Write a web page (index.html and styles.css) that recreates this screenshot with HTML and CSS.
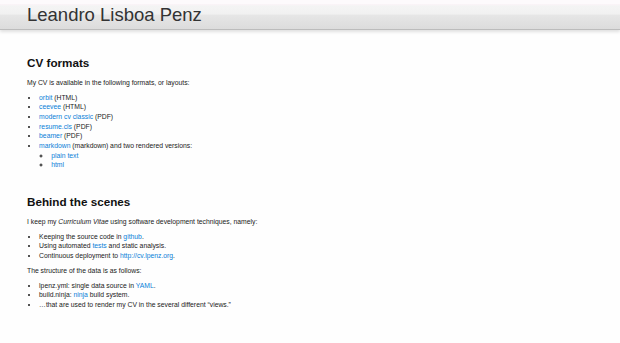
FILE: index.html
```html
<!DOCTYPE html>
<html lang="en">
<head>
  <meta charset="UTF-8">
  <meta name="viewport" content="width=device-width, initial-scale=1.0">
  <title>Leandro Lisboa Penz</title>
  <link rel="stylesheet" href="styles.css">
</head>
<body>
  <div class="navbar">
    <span class="brand">Leandro Lisboa Penz</span>
  </div>

  <div class="container">
    <div class="section">
      <h2>CV formats</h2>
      <p>My CV is available in the following formats, or layouts:</p>
      <ul>
        <li><a href="#">orbit</a> (HTML)</li>
        <li><a href="#">ceevee</a> (HTML)</li>
        <li><a href="#">modern cv classic</a> (PDF)</li>
        <li><a href="#">resume.cls</a> (PDF)</li>
        <li><a href="#">beamer</a> (PDF)</li>
        <li><a href="#">markdown</a> (markdown) and two rendered versions:
          <ul>
            <li><a href="#">plain text</a></li>
            <li><a href="#">html</a></li>
          </ul>
        </li>
      </ul>
    </div>

    <div class="section">
      <h2>Behind the scenes</h2>
      <p>I keep my <em>Curriculum Vitae</em> using software development techniques, namely:</p>
      <ul>
        <li>Keeping the source code in <a href="#">github</a>.</li>
        <li>Using automated <a href="#">tests</a> and static analysis.</li>
        <li>Continuous deployment to <a href="#">http://cv.lpenz.org</a>.</li>
      </ul>
      <p>The structure of the data is as follows:</p>
      <ul>
        <li>lpenz.yml: single data source in <a href="#">YAML</a>.</li>
        <li>build.ninja: <a href="#">ninja</a> build system.</li>
        <li>&hellip;that are used to render my CV in the several different &ldquo;views.&rdquo;</li>
      </ul>
    </div>
  </div>
</body>
</html>
```

FILE: styles.css
```css
* {
  box-sizing: border-box;
}

body {
  margin: 0;
  background: #fefefe;
  color: #1a1a1a;
  font-family: 'Liberation Sans', Arial, sans-serif;
  font-size: 6.8px;
  line-height: 9.7px;
}

a {
  color: #0a80d8;
  text-decoration: none;
}

.navbar {
  height: 30px;
  padding: 0 27px;
  border-top: 4px solid #fdfafc;
  border-bottom: 1px solid #bcbcbc;
  background: linear-gradient(#fbf3f8 0, #f4f4f4 8%, #f1f1f1 40%, #e6e6e6 45%, #dcdcdc 100%);
  box-shadow: 0 2px 3px rgba(0, 0, 0, 0.12);
}

.brand {
  display: block;
  font-size: 18.5px;
  line-height: 21px;
  color: #333;
}

.container {
  padding: 0 27px;
}

.section {
  margin-top: 23px;
}

.section + .section {
  margin-top: 22px;
}

h2 {
  margin: 4.8px 0 5.4px;
  font-size: 11.7px;
  line-height: 19.4px;
  font-weight: bold;
  color: #111;
}

p {
  margin: 0 0 5px;
}

ul {
  margin: 0 0 5.3px;
  padding-left: 12.1px;
}

ul ul {
  margin-bottom: 0;
}
```
